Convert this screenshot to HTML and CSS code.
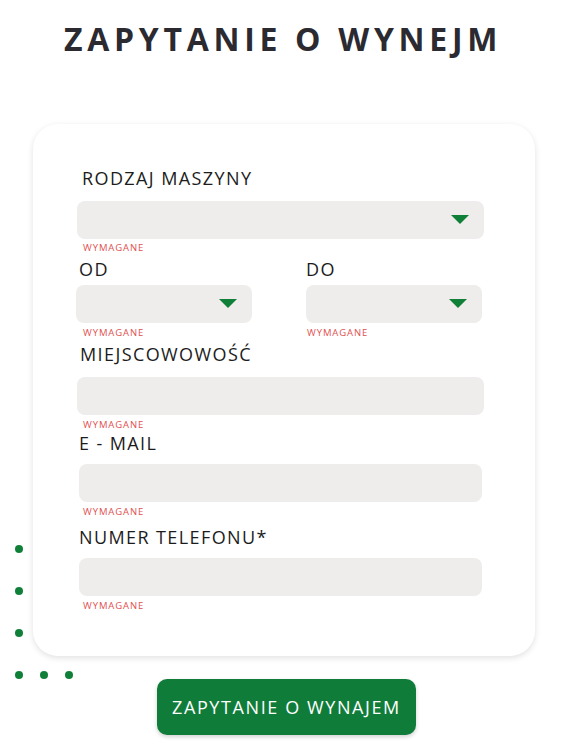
FILE: index.html
```html
<!DOCTYPE html>
<html lang="pl">
<head>
<meta charset="utf-8">
<title>Zapytanie o wynajem</title>
<link rel="stylesheet" href="styles.css">
</head>
<body>
<div class="page">
  <h1 class="title">ZAPYTANIE O WYNEJM</h1>
  <div class="dots" aria-hidden="true">
    <span class="dot d1"></span><span class="dot d2"></span><span class="dot d3"></span>
    <span class="dot d4"></span><span class="dot d5"></span><span class="dot d6"></span>
  </div>
  <form class="card">
    <div class="field f1">
      <label class="label">RODZAJ MASZYNY</label>
      <div class="input select"><span class="caret"></span></div>
      <div class="error">WYMAGANE</div>
    </div>
    <div class="row">
      <div class="field half">
        <label class="label">OD</label>
        <div class="input select"><span class="caret"></span></div>
        <div class="error">WYMAGANE</div>
      </div>
      <div class="field half">
        <label class="label">DO</label>
        <div class="input select"><span class="caret"></span></div>
        <div class="error">WYMAGANE</div>
      </div>
    </div>
    <div class="field f3">
      <label class="label">MIEJSCOWOWOŚĆ</label>
      <div class="input"></div>
      <div class="error">WYMAGANE</div>
    </div>
    <div class="field f4">
      <label class="label">E - MAIL</label>
      <div class="input"></div>
      <div class="error">WYMAGANE</div>
    </div>
    <div class="field f5">
      <label class="label">NUMER TELEFONU*</label>
      <div class="input"></div>
      <div class="error">WYMAGANE</div>
    </div>
  </form>
  <button class="submit" type="button">ZAPYTANIE O WYNAJEM</button>
</div>
</body>
</html>
```
FILE: styles.css
```css
* { box-sizing: border-box; }
html, body { margin: 0; padding: 0; background: #fff; }
body { font-family: "Open Sans", "Liberation Sans", sans-serif; color: #1c1c1c; }
.page { position: relative; width: 576px; height: 747px; overflow: hidden; }
.title {
  margin: 0;
  padding-top: 20px;
  padding-right: 10px;
  text-align: center;
  font-size: 32px;
  line-height: 38px;
  font-weight: 700;
  letter-spacing: 4.7px;
  color: #2c2a31;
}
.card {
  margin: 66px 0 0 33px;
  width: 502px;
  height: 532px;
  background: #fff;
  border-radius: 25px;
  box-shadow: 0 2px 6px rgba(0,0,0,0.12);
  padding: 44px 51px 0 44px;
  display: flex;
  flex-direction: column;
}
.label {
  display: block;
  font-size: 18px;
  line-height: 20px;
  letter-spacing: 1.4px;
  color: #1c1c1c;
}
.input {
  position: relative;
  height: 38px;
  background: #eeedeb;
  border-radius: 8px;
}
.caret {
  position: absolute;
  right: 15px;
  top: 14px;
  width: 0; height: 0;
  border-left: 9.5px solid transparent;
  border-right: 9.5px solid transparent;
  border-top: 9px solid #108039;
}
.error {
  font-size: 9.5px;
  line-height: 11px;
  color: #df5050;
  letter-spacing: 0.9px;
  margin-top: 4px;
  padding-left: 6px;
}
.f1 .label { padding-left: 5px; margin-bottom: 13px; }
.f1 .error { margin-top: 3px; }
.row { display: flex; justify-content: space-between; margin-top: 6px; margin-left: -1px; margin-right: 2px; }
.half { width: 176px; }
.half .label { padding-left: 3px; margin-bottom: 5.5px; }
.half + .half .label { padding-left: 0; }
.half .error { margin-top: 4.5px; padding-left: 7px; }
.half + .half .error { padding-left: 1px; }
.f3 { margin-top: 6px; }
.f3 .label { padding-left: 3px; margin-bottom: 12.5px; }
.f4 { margin-top: 3px; margin-left: 2px; margin-right: 2px; }
.f4 .label { margin-bottom: 11.5px; }
.f4 .error { padding-left: 4px; }
.f5 { margin-top: 10px; margin-left: 2px; margin-right: 2px; }
.f5 .label { margin-bottom: 10.5px; }
.f5 .error { padding-left: 4px; }
.submit {
  display: block;
  margin: 23px 0 0 157px;
  width: 259px;
  height: 56px;
  border: 0;
  border-radius: 10px;
  background: #107c3a;
  color: #fff;
  font-family: "Open Sans", "Liberation Sans", sans-serif;
  font-size: 18px;
  letter-spacing: 1.6px;
  box-shadow: 0 2px 4px rgba(0,0,0,0.18);
  padding: 0;
}
.dots { position: absolute; left: 0; top: 0; width: 0; height: 0; }
.dot {
  position: absolute;
  width: 8px; height: 8px;
  border-radius: 50%;
  background: #108039;
}
.d1 { left: 15px; top: 545px; }
.d2 { left: 15px; top: 587px; }
.d3 { left: 15px; top: 629px; }
.d4 { left: 15px; top: 671px; }
.d5 { left: 40px; top: 671px; }
.d6 { left: 65px; top: 671px; }
```
